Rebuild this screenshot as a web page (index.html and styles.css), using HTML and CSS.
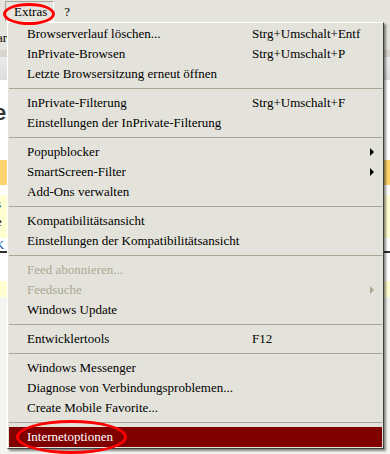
FILE: index.html
```html
<!DOCTYPE html>
<html lang="de">
<head>
    <meta charset="UTF-8">
    <title>Extras-Menü</title>
    <link rel="stylesheet" href="styles.css">
</head>
<body>
    <!-- Menüleiste -->
    <div class="menubar">
        <span class="menu-title pressed">Extras</span>
        <span class="menu-title">?</span>
    </div>

    <!-- Seite im Hintergrund (nur an den Rändern sichtbar) -->
    <div class="page">
        <div class="band toolbar"><span class="cut">ar</span></div>
        <div class="band bar-line"></div>
        <div class="band bar-grey"></div>
        <div class="band white head"><span class="cut big">e</span></div>
        <div class="band orange"></div>
        <div class="band white thin"></div>
        <div class="band pale info"><span class="cut">s</span><span class="cut">e</span></div>
        <div class="band white link"><span class="cut blue">K</span></div>
        <div class="band rule"></div>
        <div class="band white gap"></div>
        <div class="band pale note"></div>
        <div class="band rest"></div>
    </div>

    <!-- Menü Extras -->
    <div class="menu">
        <div class="item"><span>Browserverlauf löschen...</span><span class="key">Strg+Umschalt+Entf</span></div>
        <div class="item"><span>InPrivate-Browsen</span><span class="key">Strg+Umschalt+P</span></div>
        <div class="item"><span>Letzte Browsersitzung erneut öffnen</span></div>
        <div class="sep"></div>
        <div class="item"><span>InPrivate-Filterung</span><span class="key">Strg+Umschalt+F</span></div>
        <div class="item"><span>Einstellungen der InPrivate-Filterung</span></div>
        <div class="sep"></div>
        <div class="item"><span>Popupblocker</span><span></span><span class="arrow"></span></div>
        <div class="item"><span>SmartScreen-Filter</span><span></span><span class="arrow"></span></div>
        <div class="item"><span>Add-Ons verwalten</span></div>
        <div class="sep"></div>
        <div class="item"><span>Kompatibilitätsansicht</span></div>
        <div class="item"><span>Einstellungen der Kompatibilitätsansicht</span></div>
        <div class="sep"></div>
        <div class="item disabled"><span>Feed abonnieren...</span></div>
        <div class="item disabled"><span>Feedsuche</span><span></span><span class="arrow"></span></div>
        <div class="item"><span>Windows Update</span></div>
        <div class="sep"></div>
        <div class="item"><span>Entwicklertools</span><span class="key">F12</span></div>
        <div class="sep"></div>
        <div class="item"><span>Windows Messenger</span></div>
        <div class="item"><span>Diagnose von Verbindungsproblemen...</span></div>
        <div class="item"><span>Create Mobile Favorite...</span></div>
        <div class="sep"></div>
        <div class="item selected"><span>Internetoptionen</span></div>
    </div>

    <!-- rote Markierungen -->
    <div class="mark mark-extras"></div>
    <div class="mark mark-options"></div>
</body>
</html>
```

FILE: styles.css
```css
html, body { margin: 0; padding: 0; }
body { width: 390px; height: 454px; overflow: hidden; position: relative; font-family: "Liberation Serif", Tinos, "Times New Roman", Times, serif; font-size: 13px; color: #000; background: #fff; }

.menubar { height: 22px; box-sizing: border-box; padding: 1px 0 0 5px; display: flex; align-items: flex-start; gap: 9px; background: #e6e5dd; }
.menu-title { height: 21px; line-height: 20px; box-sizing: border-box; padding: 0 6px 0 8px; border: 1px solid transparent; }
.menu-title.pressed { border-color: #a5a49a #fff #fff #a5a49a; }
.menu-title + .menu-title { padding: 0; }

.page { display: flex; flex-direction: column; height: 432px; overflow: hidden; }
.band { flex: none; overflow: hidden; position: relative; }
.cut { display: inline-block; margin-left: -3px; }
.toolbar { height: 28px; line-height: 32px; background: #e6e5dd; }
.bar-line { height: 7px; background: #d6d4cb; }
.bar-grey { height: 23px; background: linear-gradient(#ececec, #dcdcdc); }
.white { background: #fff; }
.head { height: 80px; }
.big { font-family: "Liberation Sans", Arial, sans-serif; font-weight: bold; font-size: 22px; color: #333; margin-top: 20px; margin-left: -6px; }
.orange { height: 25px; background: #fcd36c; }
.thin { height: 10px; }
.pale { background: #ffffd2; }
.info { height: 43px; display: flex; flex-direction: column; }
.info .cut { margin-left: -4px; line-height: 18px; }
.link { height: 13px; line-height: 13px; }
.blue { color: #2050c0; margin-left: -5px; }
.rule { height: 2px; background: #303030; }
.gap { height: 28px; }
.note { height: 16px; }
.rest { flex: 1; background: #f4f4f0; }

.menu { position: absolute; left: 7px; top: 22px; width: 377px; box-sizing: border-box; padding: 1px; background: #e4e3db; border: 1px solid; border-color: #fff #404040 #404040 #fff; box-shadow: 2px 2px 2px rgba(0, 0, 0, 0.45); }
.item { height: 20px; line-height: 20px; display: grid; grid-template-columns: 225px 1fr 12px; padding-left: 18px; white-space: nowrap; }
.arrow { width: 0; height: 0; margin-top: 6px; border-left: 4px solid #000; border-top: 4px solid transparent; border-bottom: 4px solid transparent; }
.disabled { color: #a9a893; }
.disabled .arrow { border-left-color: #a9a893; }
.selected { background: #800000; color: #fff; }
.sep { height: 9px; display: flex; align-items: center; }
.sep::before { content: ""; flex: 1; height: 1px; background: #a9a893; }

.mark { position: absolute; border: 3px solid #f00; border-radius: 50%; box-sizing: border-box; }
.mark-extras { left: 3px; top: 3px; width: 52px; height: 22px; }
.mark-options { left: 16px; top: 420px; width: 111px; height: 34px; }
```
